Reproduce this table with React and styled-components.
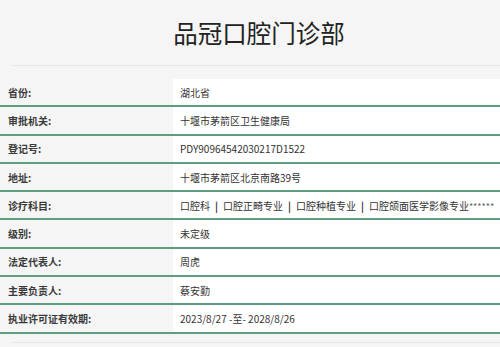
import React from 'react';
import styled, { createGlobalStyle } from 'styled-components';

const Global = createGlobalStyle`
  html, body {
    margin: 0;
    padding: 0;
    background: #f5f5f5;
    font-family: "Microsoft YaHei", "Noto Sans CJK SC", "Noto Sans", sans-serif;
    color: #333;
  }
`;

const Page = styled.div`
  width: 500px;
  height: 347px;
  overflow: hidden;
  background: #f5f5f5;
`;

const Header = styled.div`
  margin-left: 12px;
  height: 66px;
  border-bottom: 1px solid #e6e6e6;
  display: flex;
  align-items: center;
  justify-content: center;
  padding-left: 6px;
  box-sizing: border-box;
`;

const Title = styled.h1`
  margin: 0;
  font-size: 24.5px;
  font-weight: 400;
  color: #222;
`;

const Table = styled.div`
  margin-top: 13px;
  display: grid;
  grid-template-columns: 173px 1fr;
`;

const Row = styled.div`
  display: contents;
`;

const Cell = styled.div`
  height: 26.3px;
  border-bottom: 2px solid #5f9c80;
  display: flex;
  align-items: center;
  font-size: 10px;
  white-space: nowrap;
`;

const Label = styled(Cell)`
  background: #f5f5f5;
  padding-left: 8px;
  font-weight: 700;
  color: #3a3a3a;
`;

const Value = styled(Cell)`
  background: #fff;
  padding-left: 7px;
  color: #333;
`;

const Sep = styled.span`
  margin: 0 5px;
  font-weight: 700;
`;

const Stars = styled.span`
  font-size: 9px;
  color: #666;
  align-self: flex-start;
  margin-top: 8px;
`;

const Footer = styled.div`
  margin: 8px 0 0 12px;
  border-top: 1px solid #e6e6e6;
`;

const rows = [
  ['省份:', '湖北省'],
  ['审批机关:', '十堰市茅箭区卫生健康局'],
  ['登记号:', 'PDY90964542030217D1522'],
  ['地址:', '十堰市茅箭区北京南路39号'],
  ['诊疗科目:', 'subjects'],
  ['级别:', '未定级'],
  ['法定代表人:', '周虎'],
  ['主要负责人:', '蔡安勤'],
  ['执业许可证有效期:', '2023/8/27 -至- 2028/8/26'],
];

const subjects = ['口腔科', '口腔正畸专业', '口腔种植专业', '口腔颌面医学影像专业'];

const App = () => (
  <Page>
    <Global />
    <Header>
      <Title>品冠口腔门诊部</Title>
    </Header>
    <Table>
      {rows.map(([label, value]) => (
        <Row key={label}>
          <Label>{label}</Label>
          <Value>
            {value === 'subjects' ? (
              <>
                {subjects.map((s, i) => (
                  <React.Fragment key={s}>
                    {i > 0 && <Sep>|</Sep>}
                    {s}
                  </React.Fragment>
                ))}
                <Stars>******</Stars>
              </>
            ) : (
              value
            )}
          </Value>
        </Row>
      ))}
    </Table>
    <Footer />
  </Page>
);

export default App;
